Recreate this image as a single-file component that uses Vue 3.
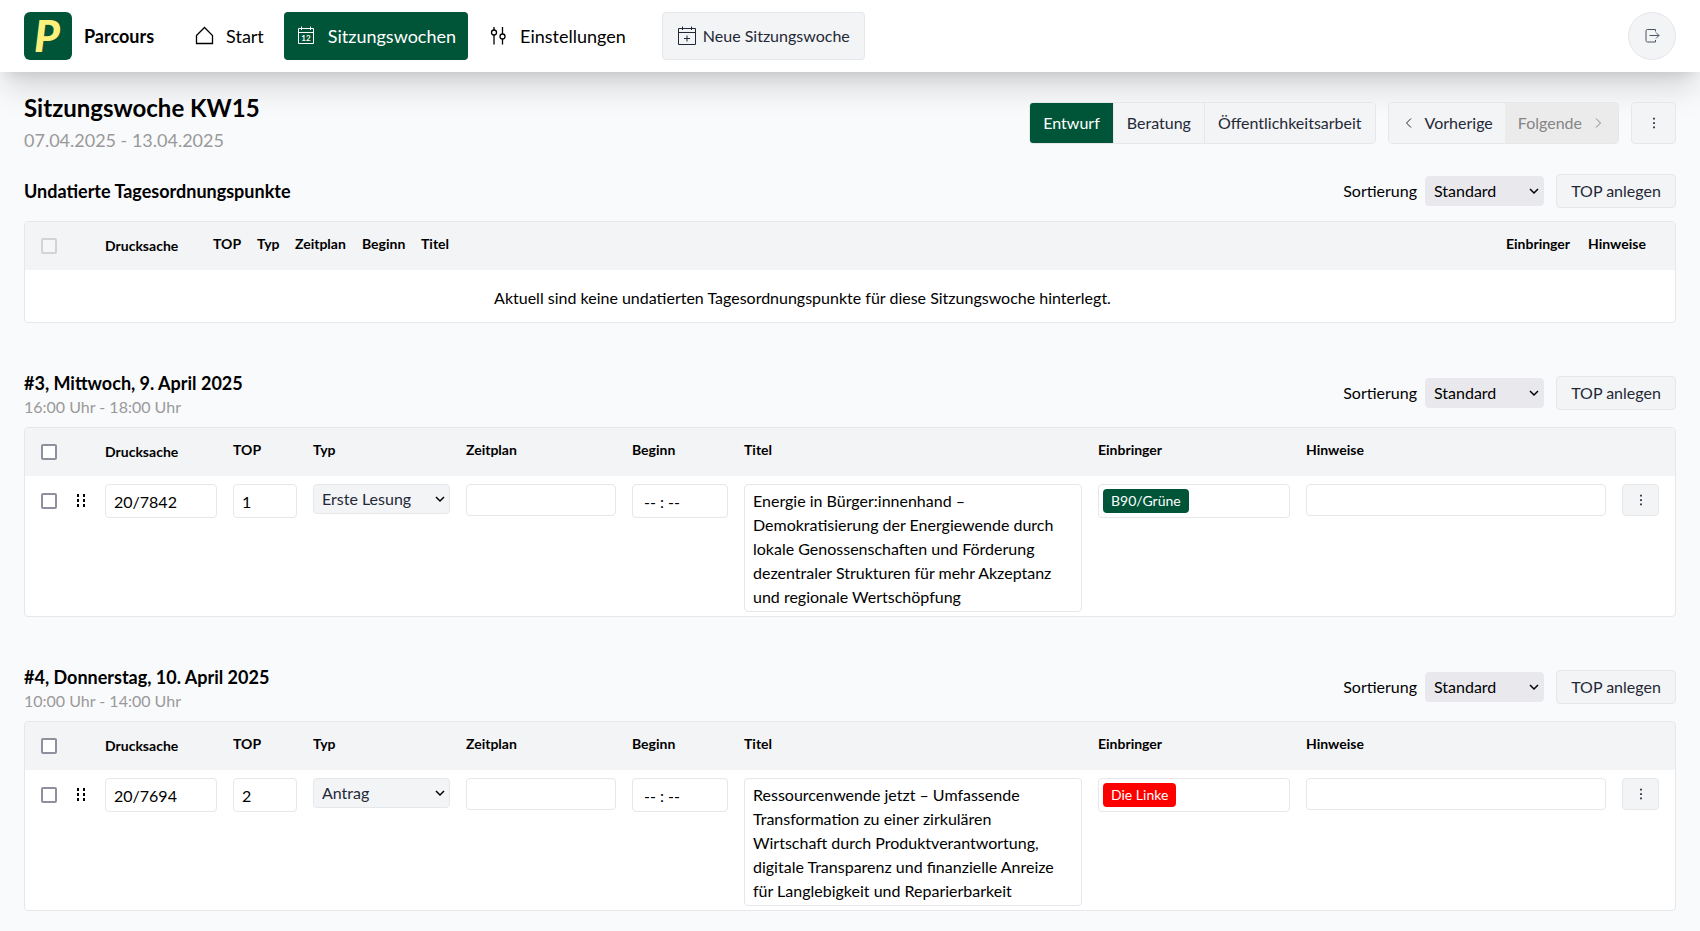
<script setup>
import { ref } from 'vue'

const stage = ref('Entwurf')
const stages = ['Entwurf', 'Beratung', 'Öffentlichkeitsarbeit']
const columns = ['Drucksache', 'TOP', 'Typ', 'Zeitplan', 'Beginn', 'Titel', 'Einbringer', 'Hinweise']

const sections = ref([
  { id: 'u', title: 'Undatierte Tagesordnungspunkte', time: '', items: [] },
  {
    id: 'd3',
    title: '#3, Mittwoch, 9. April 2025',
    time: '16:00 Uhr - 18:00 Uhr',
    items: [
      {
        paper: '20/7842', top: '1', type: 'Erste Lesung', schedule: '', start: '-- : --', notes: '',
        title: 'Energie in Bürger:innenhand – Demokratisierung der Energiewende durch lokale Genossenschaften und Förderung dezentraler Strukturen für mehr Akzeptanz und regionale Wertschöpfung',
        party: 'B90/Grüne', tone: 'green',
      },
    ],
  },
  {
    id: 'd4',
    title: '#4, Donnerstag, 10. April 2025',
    time: '10:00 Uhr - 14:00 Uhr',
    items: [
      {
        paper: '20/7694', top: '2', type: 'Antrag', schedule: '', start: '-- : --', notes: '',
        title: 'Ressourcenwende jetzt – Umfassende Transformation zu einer zirkulären Wirtschaft durch Produktverantwortung, digitale Transparenz und finanzielle Anreize für Langlebigkeit und Reparierbarkeit',
        party: 'Die Linke', tone: 'red',
      },
    ],
  },
])
</script>

<template>
  <div class="page">
    <header class="topbar">
      <a href="#" class="brand">
        <svg class="logo" viewBox="0 0 48 48" aria-hidden="true">
          <rect width="48" height="48" rx="6" fill="#005538" />
          <text x="10" y="40" class="logo-letter">P</text>
        </svg>
        <span>Parcours</span>
      </a>
      <nav class="nav">
        <a href="#" class="nav-link">
          <svg class="icon bold" viewBox="0 0 20 20"><path d="M2.500 9.500 10.500 1.500 18.500 9.500V17.500H2.500Z" /></svg>
          <span>Start</span>
        </a>
        <a href="#" class="nav-link active">
          <svg class="icon" viewBox="0 0 20 20">
            <path d="M2.500 2.500h15v15h-15ZM2.500 6.500h15M5.500 .5v3.500M14.500 .5v3.500" />
            <text x="10" y="15" class="day">12</text>
          </svg>
          <span>Sitzungswochen</span>
        </a>
        <a href="#" class="nav-link">
          <svg class="icon bold" viewBox="0 0 20 20">
            <circle cx="6" cy="6.500" r="2.500" /><circle cx="14.500" cy="10.500" r="2.500" />
            <path d="M6 1v3M6 9v9.500M14.500 1v7M14.500 13v5.500" />
          </svg>
          <span>Einstellungen</span>
        </a>
      </nav>
      <button type="button" class="btn new-week">
        <svg class="icon" viewBox="0 0 20 20">
          <path d="M1.500 2.500h17v16h-17ZM1.500 6.500h17M5.500 .5v3.500M14.500 .5v3.500M10 9.500v6M7 12.500h6" />
        </svg>
        <span>Neue Sitzungswoche</span>
      </button>
      <button type="button" class="logout" aria-label="Abmelden">
        <svg viewBox="0 0 16 16"><path d="M11.500 3.500V1.500H3.500Q2 1.500 2 3v9.500Q2 14 3.500 14H11.500V12M5.500 7.500H15M12 4.500l3 3-3 3" /></svg>
      </button>
    </header>

    <main class="content">
      <div class="week">
        <div>
          <h1>Sitzungswoche KW15</h1>
          <p class="range">07.04.2025 - 13.04.2025</p>
        </div>
        <div class="week-actions">
          <div class="group stages">
            <button
              v-for="s in stages" :key="s" type="button"
              :class="{ current: s === stage }" @click="stage = s"
            >{{ s }}</button>
          </div>
          <div class="group pager">
            <button type="button">
              <svg viewBox="0 0 16 16"><path d="M10 3.500 5.500 8l4.500 4.500" /></svg>Vorherige
            </button>
            <button type="button" disabled>
              Folgende<svg viewBox="0 0 16 16"><path d="m6 3.500 4.500 4.500L6 12.500" /></svg>
            </button>
          </div>
          <button type="button" class="btn more more-large" aria-label="Weitere Aktionen">
            <svg viewBox="0 0 16 16"><path d="M7 2h2v2H7ZM7 7h2v2H7ZM7 12h2v2H7Z" /></svg>
          </button>
        </div>
      </div>

      <section v-for="sec in sections" :key="sec.id" :class="['block', { dated: sec.time }]">
        <div class="block-head">
          <div class="block-title">
            <h2>{{ sec.title }}</h2>
            <p v-if="sec.time">{{ sec.time }}</p>
          </div>
          <div class="tools">
            <label :for="'sort-' + sec.id">Sortierung</label>
            <span class="select sort">
              <select :id="'sort-' + sec.id"><option>Standard</option></select>
              <svg viewBox="0 0 10 10"><path d="m1 3 4 4 4-4" /></svg>
            </span>
            <button type="button" class="btn add">TOP anlegen</button>
          </div>
        </div>

        <div class="frame">
          <table :class="{ empty: !sec.items.length }">
            <colgroup>
              <col class="c-check"><col class="c-drag">
              <col v-for="c in columns" :key="c" :class="'c-' + c.toLowerCase()">
              <col class="c-more">
            </colgroup>
            <thead>
              <tr>
                <th class="check"><input type="checkbox" aria-label="Alle auswählen" :disabled="!sec.items.length"></th>
                <td></td>
                <th v-for="c in columns" :key="c" scope="col" :class="{ lead: c === 'Drucksache' }">{{ c }}</th>
                <td></td>
              </tr>
            </thead>
            <tbody>
              <tr v-if="!sec.items.length">
                <td colspan="9" class="hint">Aktuell sind keine undatierten Tagesordnungspunkte für diese Sitzungswoche hinterlegt.</td>
                <td colspan="2"></td>
              </tr>
              <tr v-for="item in sec.items" :key="item.paper">
                <td class="check"><input type="checkbox" aria-label="Auswählen"></td>
                <td class="drag">
                  <svg viewBox="0 0 16 16"><path d="M4 1h2v3H4ZM10 1h2v3h-2ZM4 6h2v3H4ZM10 6h2v3h-2ZM4 11h2v3H4ZM10 11h2v3h-2Z" /></svg>
                </td>
                <td><input v-model="item.paper" class="field" aria-label="Drucksache"></td>
                <td><input v-model="item.top" class="field" aria-label="TOP"></td>
                <td>
                  <span class="select">
                    <select v-model="item.type" aria-label="Typ"><option>Erste Lesung</option><option>Antrag</option></select>
                    <svg viewBox="0 0 10 10"><path d="m1 3 4 4 4-4" /></svg>
                  </span>
                </td>
                <td><input v-model="item.schedule" class="field low" aria-label="Zeitplan"></td>
                <td><input v-model="item.start" class="field time" aria-label="Beginn"></td>
                <td><textarea v-model="item.title" class="field" rows="5" aria-label="Titel"></textarea></td>
                <td><div class="field tags"><span :class="['tag', item.tone]">{{ item.party }}</span></div></td>
                <td><input v-model="item.notes" class="field low" aria-label="Hinweise"></td>
                <td class="last">
                  <button type="button" class="btn more" aria-label="Weitere Aktionen">
                    <svg viewBox="0 0 16 16"><path d="M7 2h2v2H7ZM7 7h2v2H7ZM7 12h2v2H7Z" /></svg>
                  </button>
                </td>
              </tr>
            </tbody>
          </table>
        </div>
      </section>
    </main>
  </div>
</template>

<style>
body {
  background: #f9fafc;
}
</style>

<style scoped>
.page {
  color: #000;
  font: 16px/24px Lato, "Open Sans", sans-serif;
}
.page *,
.page *::before {
  box-sizing: border-box;
}
h1, h2, p {
  margin: 0;
}
a {
  color: inherit;
  text-decoration: none;
}
button, input, select, textarea {
  font: inherit;
  color: inherit;
  margin: 0;
}
button {
  cursor: pointer;
}
svg {
  display: block;
  flex: none;
  fill: none;
  stroke: currentColor;
}
.topbar {
  display: flex;
  align-items: center;
  padding: 12px 24px;
  background: #fff;
  box-shadow: 0 20px 32px -5px rgba(0, 0, 0, 0.15), 0 8px 12px -6px rgba(0, 0, 0, 0.1);
}
.brand {
  display: flex;
  align-items: center;
  gap: 12px;
  font-size: 18px;
  font-weight: 700;
}
.logo {
  width: 48px;
  height: 48px;
  stroke: none;
  overflow: visible;
}
.logo-letter {
  font: italic 900 44px/1 Lato, sans-serif;
  fill: #fff07c;
}
.nav {
  display: flex;
  gap: 8px;
  margin-left: 28px;
}
.nav-link {
  display: flex;
  align-items: center;
  gap: 12px;
  height: 48px;
  padding: 0 12px;
  border-radius: 4px;
  font-size: 18px;
}
.nav-link.active {
  background: #005538;
  color: #fff;
}
.icon {
  width: 20px;
  height: 20px;
}
.icon.bold {
  stroke-width: 1.3;
}
.day {
  font: 700 8px Lato, sans-serif;
  text-anchor: middle;
  fill: currentColor;
  stroke: none;
}
.btn {
  display: flex;
  align-items: center;
  justify-content: center;
  background: #f3f4f6;
  border: 1px solid #e5e7eb;
  border-radius: 4px;
  color: #1f2937;
}
.new-week {
  height: 48px;
  margin-left: 24px;
  padding: 0 14px;
  gap: 6px;
}
.logout {
  display: grid;
  place-items: center;
  width: 48px;
  height: 48px;
  margin-left: auto;
  padding: 0;
  border: 1px solid #e5e7eb;
  border-radius: 50%;
  background: #f3f4f6;
  color: #4b5563;
}
.logout svg {
  width: 16px;
  height: 16px;
}
.content {
  padding: 20px 24px;
}
.week {
  display: flex;
  justify-content: space-between;
  align-items: center;
  margin-bottom: 20px;
}
h1 {
  font-size: 24px;
  line-height: 32px;
}
.range {
  margin-top: 2px;
  font-size: 18px;
  line-height: 28px;
  color: #999;
}
.week-actions {
  display: flex;
  gap: 12px;
}
.group {
  display: flex;
  border: 1px solid #e5e7eb;
  border-radius: 4px;
  overflow: hidden;
}
.group button {
  display: flex;
  align-items: center;
  gap: 8px;
  height: 40px;
  padding: 0 12px;
  border: 0;
  border-left: 1px solid #e5e7eb;
  background: #f3f4f6;
  color: #1f2937;
}
.group button:first-child {
  border-left: 0;
}
.stages button {
  padding: 0 13px;
}
.group .current {
  background: #005538;
  color: #fff;
}
.group button:disabled {
  background: #ebebeb;
  border-color: #ebebeb;
  color: #858585;
}
.pager svg {
  width: 16px;
  height: 16px;
}
.more {
  width: 37px;
  height: 32px;
  padding: 0;
}
.more-large {
  width: 45px;
  height: 42px;
}
.more svg {
  width: 14px;
  height: 14px;
  fill: currentColor;
  stroke: none;
}
.dated {
  margin-top: 44px;
}
.block-head {
  display: flex;
  justify-content: space-between;
  align-items: center;
  margin-bottom: 13px;
}
.dated .block-head {
  margin-bottom: 8px;
}
.dated .block-title {
  padding-top: 4px;
}
h2 {
  font-size: 18px;
  line-height: 24px;
}
.block-title p {
  color: #999;
}
.tools {
  display: flex;
  align-items: center;
}
.add {
  height: 34px;
  width: 120px;
  margin-left: 12px;
  padding: 0;
}
.select {
  position: relative;
  display: block;
}
.select select {
  appearance: none;
  display: block;
  width: 100%;
  height: 30px;
  padding: 0 24px 0 8px;
  border: 1px solid #e5e7eb;
  border-radius: 4px;
  background: #f3f4f6;
  color: #1f2937;
  line-height: 24px;
}
.select svg {
  position: absolute;
  right: 5px;
  top: 10px;
  width: 10px;
  height: 10px;
  stroke-width: 1.5;
  pointer-events: none;
}
.sort {
  width: 119px;
  margin-left: 8px;
}
.sort select {
  border-color: #e9e9ed;
  background: #e9e9ed;
  color: #000;
}
.frame {
  border: 1px solid #e5e7eb;
  border-radius: 4px;
  background: #fff;
  overflow: hidden;
}
table {
  width: 100%;
  table-layout: fixed;
  border-collapse: collapse;
}
th, td {
  padding: 0 8px;
  text-align: left;
  vertical-align: top;
}
thead {
  background: #f3f4f6;
}
thead th {
  height: 48px;
  padding-top: 12px;
  font-size: 14px;
  line-height: 20px;
  font-weight: 700;
}
thead th.lead {
  padding-top: 14px;
}
tbody td {
  padding-top: 8px;
  padding-bottom: 4px;
}
.check, thead .check {
  padding: 16px 8px 0 16px;
}
tbody .check, .drag {
  padding-top: 17px;
}
.check input {
  appearance: none;
  display: block;
  width: 16px;
  height: 16px;
  border: 2px solid #8f8f9d;
  border-radius: 2px;
  background: #fff;
}
.check input:disabled {
  border-color: #d2d3d6;
  background: #f5f6f8;
}
.drag svg {
  width: 16px;
  height: 16px;
  fill: currentColor;
  stroke: none;
}
.last {
  padding-right: 16px;
}
.hint {
  height: 52px;
  padding-top: 16px;
  text-align: center;
}
.field {
  display: block;
  width: 100%;
  height: 34px;
  padding: 4px 8px;
  border: 1px solid #e5e7eb;
  border-radius: 4px;
  background: #fff;
}
.field.low {
  height: 32px;
}
.field.time {
  padding-left: 11px;
}
textarea.field {
  height: 128px;
  padding-right: 16px;
  padding-bottom: 0;
  resize: none;
  overflow: hidden;
}
.tags {
  display: flex;
  align-items: center;
  padding: 4px;
}
.tag {
  padding: 0 8px;
  border-radius: 4px;
  color: #fff;
  font-size: 14px;
  line-height: 24px;
}
.green { background: #005538; }
.red { background: #f00; }

.c-check { width: 40px; }
.c-drag { width: 32px; }
.c-drucksache { width: 128px; }
.c-top { width: 80px; }
.c-typ { width: 153px; }
.c-zeitplan { width: 166px; }
.c-beginn { width: 112px; }
.c-titel { width: 354px; }
.c-einbringer { width: 208px; }
.c-more { width: 61px; }
.empty .c-drucksache { width: 108px; }
.empty .c-top { width: 44px; }
.empty .c-typ { width: 38px; }
.empty .c-zeitplan { width: 67px; }
.empty .c-beginn { width: 59px; }
.empty .c-titel { width: auto; }
.empty .c-einbringer { width: 82px; }
.empty .c-hinweise { width: 71px; }
.empty .c-more { width: 24px; }
</style>
